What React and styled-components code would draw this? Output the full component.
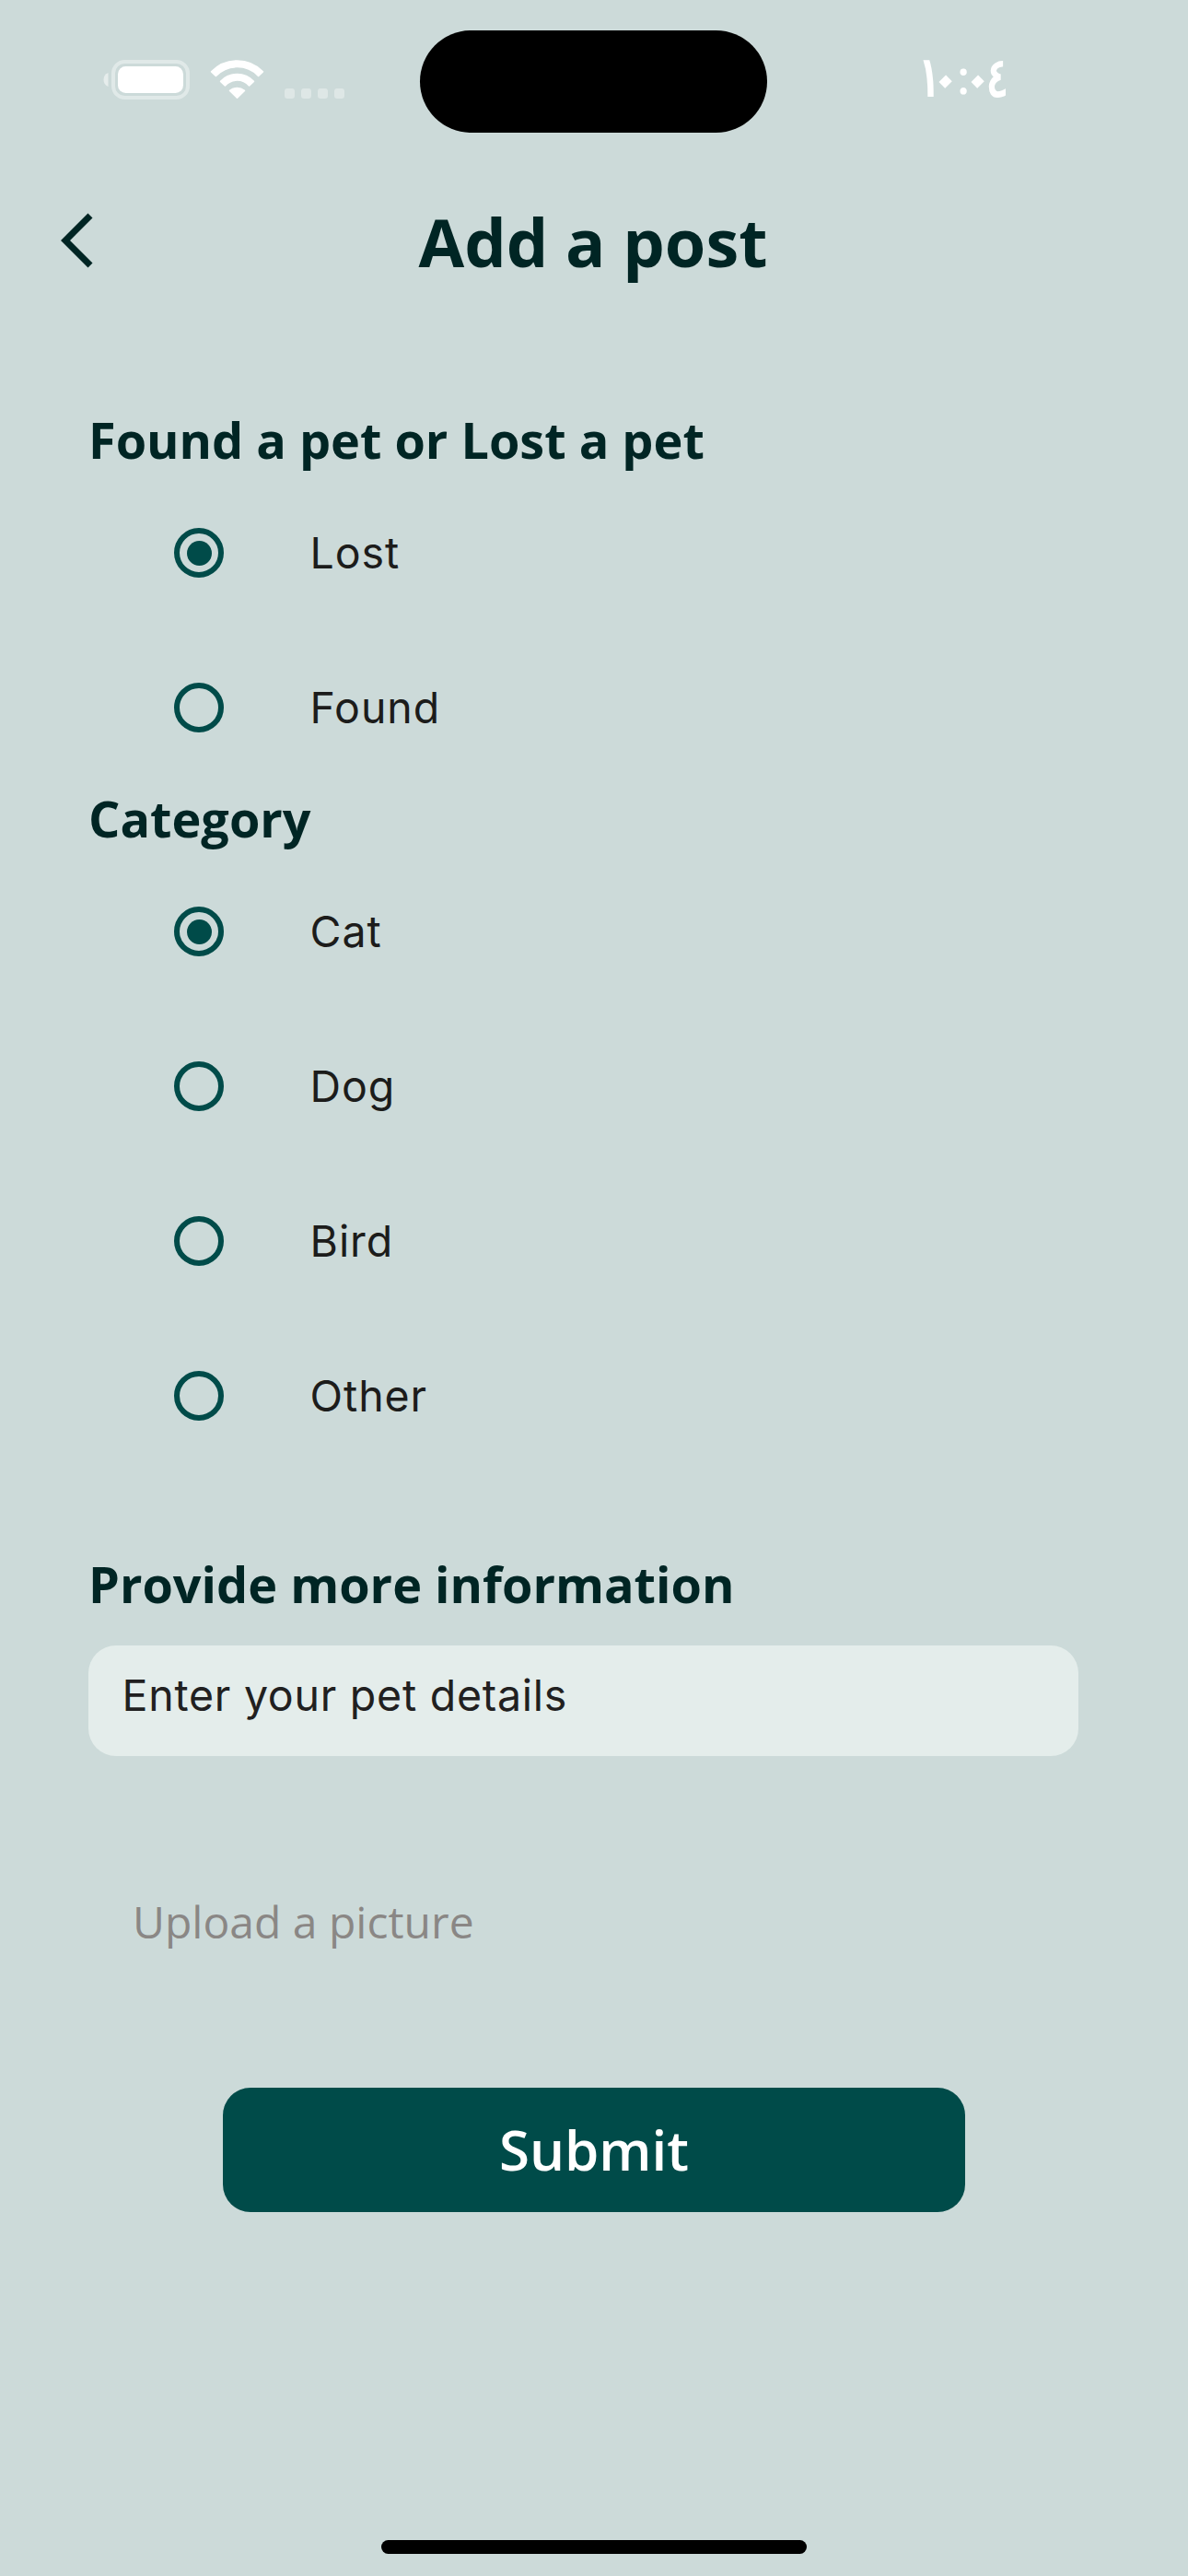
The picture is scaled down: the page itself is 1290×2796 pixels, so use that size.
import React, { useState } from "react";
import styled, { createGlobalStyle } from "styled-components";

const GlobalStyle = createGlobalStyle`
  *, *::before, *::after { box-sizing: border-box; }
  html, body { margin: 0; padding: 0; background: #ccdad9; }
`;

const Screen = styled.div`
  display: flex;
  flex-direction: column;
  width: 1290px;
  height: 2796px;
  background: #ccdad9;
  font-family: "Open Sans", sans-serif;
  overflow: hidden;
`;

const StatusBar = styled.header`
  display: grid;
  grid-template-columns: 456px 378px 1fr;
  height: 177px;
  padding-top: 33px;
`;

const StatusIcons = styled.div`
  display: flex;
  padding: 32px 0 0 112px;
`;

const StatusSvg = styled.svg`
  display: block;
`;

const Island = styled.div`
  width: 377px;
  height: 111px;
  border-radius: 56px;
  background: #000;
`;

const Clock = styled.div`
  display: flex;
  direction: ltr;
  height: 82px;
  padding: 22px 0 0 164px;
  color: #fff;
  font: 700 58px/60px "DejaVu Sans Mono", monospace;
  white-space: nowrap;
`;

const Digit = styled.span`
  display: flex;
  justify-content: center;
  width: ${(p) => p.$width}px;
  height: 60px;
  transform: scaleX(0.78);
`;

const ZeroDigit = styled(Digit)`
  transform: rotate(45deg);
  transform-origin: 50% 33px;
`;

const Colon = styled(Digit)`
  font: 600 50px/56px "Open Sans", sans-serif;
  transform: none;
`;

const TitleBar = styled.div`
  display: grid;
  grid-template-columns: 199px 1fr 201px;
  height: 263px;
  padding-top: 36px;
`;

const BackButton = styled.button`
  display: flex;
  align-items: flex-start;
  margin: 0;
  padding: 18px 0 0 66px;
  border: 0;
  background: none;
`;

const Title = styled.h1`
  margin: 0;
  color: #002524;
  font-size: 72px;
  font-weight: 700;
  line-height: 98px;
  text-align: center;
  white-space: nowrap;
`;

const Form = styled.form`
  display: flex;
  flex-direction: column;
  padding: 0 119px 0 96px;
`;

const Heading = styled.h2`
  margin: ${(p) => p.$gap || 0}px 0 0;
  padding-bottom: ${(p) => p.$after || 0}px;
  color: #002524;
  font-size: 54px;
  font-weight: 700;
  line-height: 74px;
  white-space: nowrap;
`;

const Option = styled.label`
  display: flex;
  align-items: center;
  gap: 93px;
  height: 168px;
  padding-left: 93px;
`;

const HiddenRadio = styled.input`
  appearance: none;
  width: 0;
  height: 0;
  margin: 0 -93px 0 0;
`;

const Ring = styled.span`
  display: flex;
  align-items: center;
  justify-content: center;
  width: 54px;
  height: 54px;
  border: 6px solid #004b49;
  border-radius: 50%;
`;

const Dot = styled.span`
  width: 27px;
  height: 27px;
  border-radius: 50%;
  background: #004b49;
`;

const OptionText = styled.span`
  padding-left: 0.6px;
  color: #1c1c1b;
  font: 380 46.5px/60px Inter, sans-serif;
  letter-spacing: 0.9px;
`;

const DetailsField = styled.div`
  height: 120px;
  margin-top: 30px;
  padding: 24px 36.5px 0;
  border-radius: 30px;
  background: #e4edeb;
  color: #212020;
  font: 380 46.5px/60px Inter, sans-serif;
  letter-spacing: 0.75px;
  white-space: nowrap;
`;

const UploadLink = styled.div`
  margin: 147px 0 0 48px;
  color: #8a8785;
  font-size: 48px;
  line-height: 66px;
`;

const SubmitButton = styled.button`
  width: 806px;
  height: 135px;
  margin: 147px 0 0 146px;
  padding: 0 0 2px;
  border: 0;
  border-radius: 30px;
  background: #004b49;
  color: #fff;
  font: 600 60px/82px "Open Sans", sans-serif;
`;

const HomeIndicator = styled.div`
  width: 462px;
  height: 15px;
  margin: auto auto 24px;
  border-radius: 8px;
  background: #000;
`;

function OptionGroup({ name, options }) {
  const [selected, setSelected] = useState(options[0]);
  return options.map((option) => (
    <Option key={option}>
      <HiddenRadio
        type="radio"
        name={name}
        checked={selected === option}
        onChange={() => setSelected(option)}
      />
      <Ring>{selected === option && <Dot />}</Ring>
      <OptionText>{option}</OptionText>
    </Option>
  ));
}

function StatusGlyphs() {
  return (
    <StatusSvg width="264" height="44" viewBox="0 0 264 44">
      <path d="M5.5 14 C2 15.2 0.5 18 0.5 21.5 C0.5 25 2 27.8 5.5 29 Z" fill="#fff" fillOpacity="0.5" />
      <rect x="11" y="2" width="81" height="39" rx="12.5" fill="none" stroke="#fff" strokeOpacity="0.4" strokeWidth="4" />
      <rect x="16" y="7" width="71" height="29" rx="8.5" fill="#fff" />
      <g fill="#fff" stroke="#fff" strokeWidth="1.6" strokeLinejoin="round">
        <path d="M117.6 12.8 A38.8 38.8 0 0 1 173.4 12.8 L168.6 17.4 A32 32 0 0 0 122.4 17.4 Z" />
        <path d="M127.6 23.3 A24.6 24.6 0 0 1 163.4 23.3 L158.6 27.9 A17.6 17.6 0 0 0 132.4 27.9 Z" />
        <path d="M137.6 33.4 A12.2 12.2 0 0 1 153.4 33.4 L145.5 41.2 Z" />
      </g>
      <g fill="#fff" fillOpacity="0.35">
        {[197, 215, 233, 251].map((x) => (
          <rect key={x} x={x} y="31" width="11" height="11" rx="3" />
        ))}
      </g>
    </StatusSvg>
  );
}

export default function App() {
  return (
    <Screen>
      <GlobalStyle />
      <StatusBar>
        <StatusIcons>
          <StatusGlyphs />
        </StatusIcons>
        <Island />
        <Clock>
          <Digit $width={20}>١</Digit>
          <ZeroDigit $width={18}>٠</ZeroDigit>
          <Colon $width={20}>:</Colon>
          <ZeroDigit $width={12}>٠</ZeroDigit>
          <Digit $width={31}>٤</Digit>
        </Clock>
      </StatusBar>
      <TitleBar>
        <BackButton aria-label="Back">
          <svg width="36" height="60" viewBox="0 0 36 60">
            <path d="M0 30 L29.5 0.5 L34.5 5.5 L10 30 L34.5 54.5 L29.5 59.5 Z" fill="#002524" />
          </svg>
        </BackButton>
        <Title>Add a post</Title>
      </TitleBar>
      <Form onSubmit={(e) => e.preventDefault()}>
        <Heading $after={2}>Found a pet or Lost a pet</Heading>
        <OptionGroup name="status" options={["Lost", "Found"]} />
        <Heading $gap={-1} $after={2}>Category</Heading>
        <OptionGroup name="category" options={["Cat", "Dog", "Bird", "Other"]} />
        <Heading $gap={83}>Provide more information</Heading>
        <DetailsField>Enter your pet details</DetailsField>
        <UploadLink>Upload a picture</UploadLink>
        <SubmitButton>Submit</SubmitButton>
      </Form>
      <HomeIndicator />
    </Screen>
  );
}
